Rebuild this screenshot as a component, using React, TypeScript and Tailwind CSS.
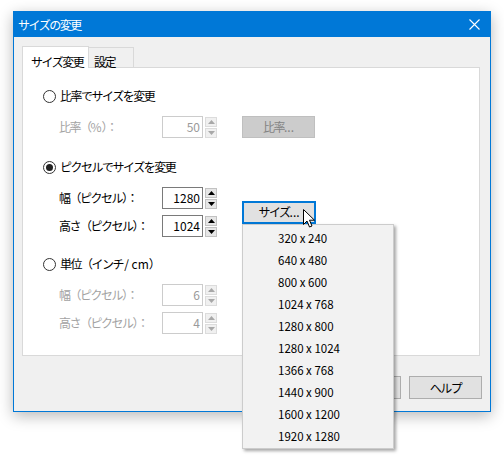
import React from 'react';

// サイズの変更 ダイアログ（Windows 10 風）

const jp = "text-[12px] tracking-[-1.5px]";

const Radio: React.FC<{ checked?: boolean; label: React.ReactNode }> = ({ checked, label }) => (
    <div className="flex items-center h-[16px]">
        <div className="w-[13px] h-[13px] rounded-full border border-[#333333] bg-white flex items-center justify-center">
            {checked && <div className="w-[7px] h-[7px] rounded-full bg-[#222222]" />}
        </div>
        <span className={`ml-[4px] text-black ${jp}`}>{label}</span>
    </div>
);

const Arrow: React.FC<{ up?: boolean; color: string }> = ({ up, color }) => (
    <svg width="7" height="4" viewBox="0 0 7 4">
        <polygon points={up ? "0,4 7,4 3.5,0" : "0,0 7,0 3.5,4"} fill={color} />
    </svg>
);

const Spin: React.FC<{ label: React.ReactNode; value: string; disabled?: boolean }> = ({ label, value, disabled }) => (
    <div className="flex items-center h-[22px]">
        <span className={`w-[103px] ${jp} ${disabled ? 'text-[#a3a3a3]' : 'text-black'}`}>{label}</span>
        <div className={`w-[41px] h-[22px] border bg-white flex items-center justify-end pr-[2px] text-[12px] ${disabled ? 'border-[#cccccc] text-[#9a9a9a]' : 'border-[#7a7a7a] text-black'}`}>
            {value}
        </div>
        <div className="ml-[2px] h-[22px] flex flex-col justify-center gap-[1px]">
            <div className={`w-[12px] h-[10px] border flex items-center justify-center ${disabled ? 'border-[#dcdcdc] bg-[#f0f0f0]' : 'border-[#c2c2c2] bg-[#e6e6e6]'}`}>
                <Arrow up color={disabled ? '#a8a8a8' : '#000000'} />
            </div>
            <div className={`w-[12px] h-[10px] border flex items-center justify-center ${disabled ? 'border-[#dcdcdc] bg-[#f0f0f0]' : 'border-[#c2c2c2] bg-[#e6e6e6]'}`}>
                <Arrow color={disabled ? '#a8a8a8' : '#000000'} />
            </div>
        </div>
    </div>
);

const sizes = ['320 x 240', '640 x 480', '800 x 600', '1024 x 768', '1280 x 800', '1280 x 1024', '1366 x 768', '1440 x 900', '1600 x 1200', '1920 x 1280'];

export default function App() {
    return (
        <div className="relative w-[504px] h-[460px] bg-white overflow-hidden pt-[11px] pl-[13px] font-['Noto_Sans_CJK_JP','Noto_Sans',sans-serif] leading-none">
            <div className="w-[478px] h-[401px] border border-[#0078d7] shadow-[0_4px_14px_rgba(0,0,0,0.28)] flex flex-col">
                {/* タイトルバー */}
                <div className="h-[25px] bg-[#0078d7] flex items-center justify-between pl-[4px] pr-[10px] text-white">
                    <span className={jp}>サイズの変更</span>
                    <svg width="11" height="11" viewBox="0 0 11 11">
                        <path d="M0.5 0.5L10.5 10.5M10.5 0.5L0.5 10.5" stroke="#ffffff" strokeWidth="1.1" />
                    </svg>
                </div>

                <div className="flex-1 bg-[#f0f0f0] pt-[8px] px-[8px]">
                    {/* タブ */}
                    <div className="flex items-end h-[22px]">
                        <div className="relative z-10 w-[67px] h-[22px] -mb-px bg-white border border-b-0 border-[#d9d9d9] pl-[8px] pt-[5px]">
                            <span className={`text-black ${jp}`}>サイズ変更</span>
                        </div>
                        <div className="w-[45px] h-[20px] border border-l-0 border-b-0 border-[#d9d9d9] pl-[5px] pt-[4px]">
                            <span className={`text-black ${jp}`}>設定</span>
                        </div>
                    </div>

                    {/* パネル */}
                    <div className="w-[458px] h-[289px] bg-white border border-[#d9d9d9] pl-[20px] pt-[20px] flex flex-col">
                        <Radio label="比率でサイズを変更" />
                        <div className="mt-[12px] ml-[16px] flex items-center">
                            <Spin label={<>比率（<span className="tracking-normal">%</span>）：</>} value="50" disabled />
                            <div className="ml-[25px] w-[73px] h-[22px] bg-[#cccccc] border border-[#bfbfbf] flex items-center justify-center">
                                <span className={`text-[#838383] ${jp}`}>比率<span className="tracking-normal">...</span></span>
                            </div>
                        </div>

                        <div className="mt-[21px]">
                            <Radio checked label="ピクセルでサイズを変更" />
                        </div>
                        <div className="mt-[12px] ml-[16px] flex items-center">
                            <div className="flex flex-col gap-[6px]">
                                <Spin label="幅（ピクセル）：" value="1280" />
                                <Spin label="高さ（ピクセル）：" value="1024" />
                            </div>
                            <div className="ml-[25px] w-[74px] h-[23px] bg-[#e1e1e1] border-2 border-[#0078d7] flex items-center justify-center">
                                <span className={`text-black ${jp}`}>サイズ<span className="tracking-normal">...</span></span>
                            </div>
                        </div>

                        <div className="mt-[19px]">
                            <Radio label={<>単位（インチ <span className="tracking-normal">/ cm</span>）</>} />
                        </div>
                        <div className="mt-[12px] ml-[16px] flex flex-col gap-[6px]">
                            <Spin label="幅（ピクセル）：" value="6" disabled />
                            <Spin label="高さ（ピクセル）：" value="4" disabled />
                        </div>
                    </div>

                    {/* ボタン（左の2つはメニューの下に隠れている） */}
                    <div className="mt-[20px] flex justify-end gap-[8px]">
                        <div className="w-[73px] h-[23px] bg-[#e1e1e1] border border-[#adadad]" />
                        <div className="w-[73px] h-[23px] bg-[#e1e1e1] border border-[#adadad]" />
                        <div className="w-[73px] h-[23px] bg-[#e1e1e1] border border-[#adadad] flex items-center justify-center">
                            <span className={`text-black ${jp}`}>ヘルプ</span>
                        </div>
                    </div>
                </div>
            </div>

            {/* ドロップダウンメニュー */}
            <div className="absolute left-[242px] top-[224px] w-[152px] h-[225px] bg-[#f2f2f2] border border-[#cccccc] shadow-[2px_2px_3px_rgba(0,0,0,0.35)] pt-[3px]">
                {sizes.map((s) => (
                    <div key={s} className="h-[22px] flex items-center pl-[35px] text-[11.5px] text-black">
                        {s}
                    </div>
                ))}
            </div>

            {/* マウスカーソル */}
            <svg className="absolute left-[303px] top-[209px]" width="13" height="20" viewBox="0 0 13 20">
                <path d="M0.5 0.5 L0.5 15.5 L4 12 L6.5 18 L9 17 L6.5 11.2 L11.5 11.2 Z" fill="#ffffff" stroke="#000000" strokeWidth="1" strokeLinejoin="miter" />
            </svg>
        </div>
    );
}
